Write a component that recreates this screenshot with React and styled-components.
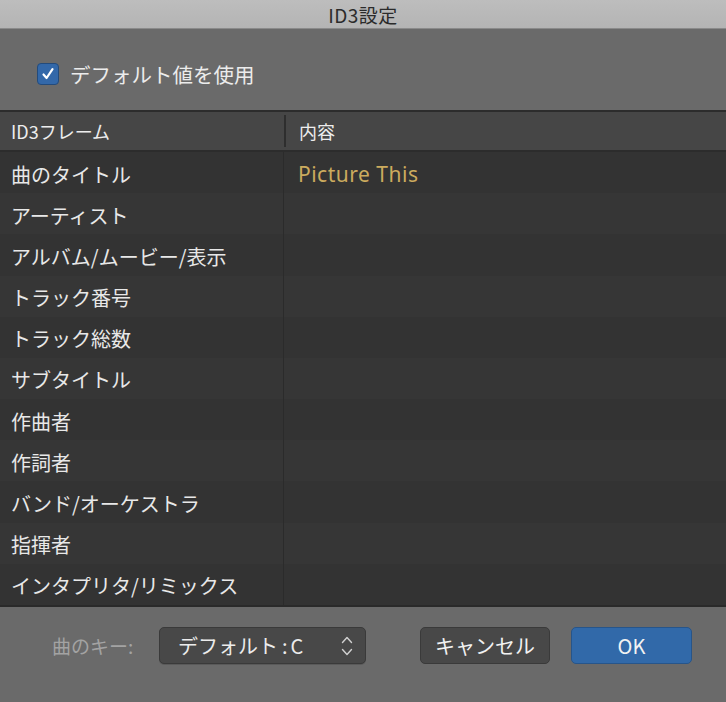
import React from "react";
import styled, { createGlobalStyle } from "styled-components";

const GlobalStyle = createGlobalStyle`
  html, body {
    margin: 0;
    padding: 0;
    background: #6a6a6a;
  }
  * {
    box-sizing: border-box;
  }
`;

const JP = `"Noto Sans CJK JP", "Noto Sans", sans-serif`;

// ウィンドウ全体
const Window = styled.div`
  width: 726px;
  height: 702px;
  display: flex;
  flex-direction: column;
  background: #6a6a6a;
  font-family: ${JP};
  overflow: hidden;
`;

const TitleBar = styled.div`
  height: 29px;
  flex: none;
  display: flex;
  align-items: center;
  justify-content: center;
  background: linear-gradient(#bdbdbd, #b4b4b4);
  border-bottom: 1px solid #8a8a8a;
  color: #2b2b2b;
  font-size: 19px;
  letter-spacing: 0.5px;
`;

const TopPanel = styled.div`
  height: 81px;
  flex: none;
  display: flex;
  align-items: flex-end;
  padding: 0 0 21px 37px;
`;

const CheckLabel = styled.label`
  display: flex;
  align-items: center;
  gap: 11px;
  color: #ececec;
  font-size: 20.5px;
`;

const CheckBox = styled.span`
  width: 22px;
  height: 22px;
  border-radius: 4px;
  background: #3368a9;
  border: 1px solid #234b7c;
  display: flex;
  align-items: center;
  justify-content: center;
`;

// テーブル
const Table = styled.div`
  flex: none;
  display: flex;
  flex-direction: column;
`;

const HeaderRow = styled.div`
  height: 42px;
  display: grid;
  grid-template-columns: 284px 1fr;
  background: #464646;
  border-top: 2px solid #2c2c2c;
  border-bottom: 2px solid #2c2c2c;
`;

const HeaderCell = styled.div`
  display: flex;
  align-items: center;
  padding-left: ${(p) => (p.$first ? "11px" : "13px")};
  color: #ededed;
  font-size: 18px;
  border-left: ${(p) => (p.$first ? "none" : "2px solid #2e2e2e")};
  margin: ${(p) => (p.$first ? "0" : "3px 0")};
`;

const Body = styled.div`
  height: 453px;
  display: grid;
  grid-template-rows: repeat(11, 1fr);
`;

const Row = styled.div`
  display: grid;
  grid-template-columns: 284px 1fr;
  background: ${(p) => (p.$odd ? "#363636" : "#333333")};
`;

const FrameCell = styled.div`
  display: flex;
  align-items: center;
  padding: 3px 0 0 11px;
  color: #e8e8e8;
  font-size: 20px;
  border-right: 1px solid #2b2b2b;
`;

const ValueCell = styled.div`
  display: flex;
  align-items: center;
  padding: 2px 0 0 14px;
  color: #ccab5e;
  font-family: "Noto Sans", "Noto Sans CJK JP", sans-serif;
  font-size: 21px;
  letter-spacing: 0.5px;
`;

// 下部パネル
const BottomPanel = styled.div`
  flex: 1;
  border-top: 2px solid #2a2a2a;
  display: flex;
  align-items: flex-start;
  padding: 20px 0 0 52px;
`;

const KeyLabel = styled.span`
  width: 107px;
  flex: none;
  color: #a3a3a3;
  font-size: 19px;
  height: 37px;
  display: flex;
  align-items: center;
`;

const Select = styled.div`
  width: 207px;
  height: 37px;
  border-radius: 5px;
  background: #484848;
  border: 1px solid #3a3a3a;
  box-shadow: 0 1px 0 rgba(0, 0, 0, 0.15);
  display: flex;
  align-items: center;
  justify-content: space-between;
  padding: 0 11px 0 18px;
  color: #ececec;
  font-size: 20px;
  margin-right: 54px;
`;

const Colon = styled.span`
  margin: 0 3px 0 4px;
`;

const Button = styled.button`
  height: 37px;
  width: ${(p) => p.$w}px;
  border-radius: 5px;
  border: 1px solid ${(p) => (p.$primary ? "#27558a" : "#3a3a3a")};
  background: ${(p) => (p.$primary ? "#3169a9" : "#484848")};
  color: #f2f2f2;
  font-family: ${JP};
  font-size: 20px;
  padding: 0;
  display: flex;
  align-items: center;
  justify-content: center;
  margin-right: ${(p) => p.$mr || 0}px;
`;

const frames = [
  "曲のタイトル",
  "アーティスト",
  "アルバム/ムービー/表示",
  "トラック番号",
  "トラック総数",
  "サブタイトル",
  "作曲者",
  "作詞者",
  "バンド/オーケストラ",
  "指揮者",
  "インタプリタ/リミックス",
];

const Check = () => (
  <svg width="14" height="14" viewBox="0 0 14 14">
    <path
      d="M2.5 7.5 L5.6 11 L11.5 2.2"
      fill="none"
      stroke="#ffffff"
      strokeWidth="2.2"
      strokeLinecap="round"
      strokeLinejoin="round"
    />
  </svg>
);

const UpDown = () => (
  <svg width="14" height="24" viewBox="0 0 14 24">
    <path
      d="M2.5 8.5 L7 3.5 L11.5 8.5 M2.5 15.5 L7 20.5 L11.5 15.5"
      fill="none"
      stroke="#d0d0d0"
      strokeWidth="1.4"
      strokeLinecap="round"
      strokeLinejoin="round"
    />
  </svg>
);

const App = () => {
  return (
    <Window>
      <GlobalStyle />
      <TitleBar>ID3設定</TitleBar>

      <TopPanel>
        <CheckLabel>
          <CheckBox>
            <Check />
          </CheckBox>
          デフォルト値を使用
        </CheckLabel>
      </TopPanel>

      <Table>
        <HeaderRow>
          <HeaderCell $first>ID3フレーム</HeaderCell>
          <HeaderCell>内容</HeaderCell>
        </HeaderRow>
        <Body>
          {frames.map((f, i) => (
            <Row key={f} $odd={i % 2 === 1}>
              <FrameCell>{f}</FrameCell>
              <ValueCell>{i === 0 ? "Picture This" : ""}</ValueCell>
            </Row>
          ))}
        </Body>
      </Table>

      <BottomPanel>
        <KeyLabel>曲のキー:</KeyLabel>
        <Select>
          <span>
            デフォルト<Colon>:</Colon>C
          </span>
          <UpDown />
        </Select>
        <Button $w={130} $mr={21}>キャンセル</Button>
        <Button $w={121} $primary>OK</Button>
      </BottomPanel>
    </Window>
  );
};

export default App;
